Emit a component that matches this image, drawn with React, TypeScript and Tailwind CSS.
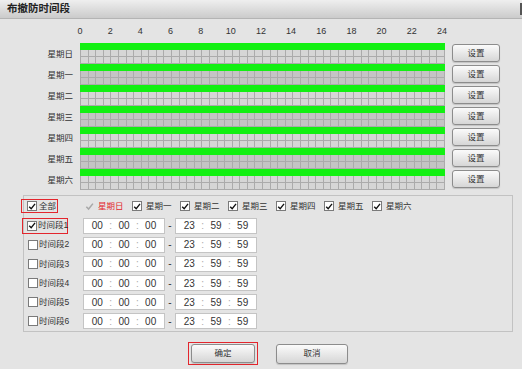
import { type ReactNode } from "react";

const days = ["星期日", "星期一", "星期二", "星期三", "星期四", "星期五", "星期六"];
const ticks = [0, 2, 4, 6, 8, 10, 12, 14, 16, 18, 20, 22, 24];
const cells = Array.from({ length: 96 }, (_, i) => i);

function Check({ checked, muted }: { checked: boolean; muted?: boolean }) {
  return (
    <span
      className={`w-[10px] h-[10px] flex items-center justify-center shrink-0 ${
        muted ? "" : "border border-[#7a7a7a] bg-white"
      }`}
    >
      {checked && (
        <svg viewBox="0 0 10 10" className="w-[9px] h-[9px]">
          <path
            d="M1.5 5.2 L4 7.8 L8.8 1.8"
            fill="none"
            stroke={muted ? "#a8a8a8" : "#111"}
            strokeWidth="1.7"
          />
        </svg>
      )}
    </span>
  );
}

function GrayButton({ children, className }: { children: ReactNode; className: string }) {
  return (
    <button
      className={`flex items-center justify-center border border-[#8c8c8c] rounded-[3px] bg-gradient-to-b from-[#fbfbfb] to-[#d6d6d6] text-[#333] text-[8.5px] shadow-[0_1px_1px_rgba(0,0,0,0.15)] ${className}`}
    >
      {children}
    </button>
  );
}

function TimeBox({ values }: { values: string[] }) {
  return (
    <div className="w-[82px] h-[16px] bg-white border border-[#c4c4c4] flex items-center text-[10px] text-[#333]">
      <span className="flex-1 text-center">{values[0]}</span>
      <span className="w-0 flex justify-center text-[#aaa]">:</span>
      <span className="flex-1 text-center">{values[1]}</span>
      <span className="w-0 flex justify-center text-[#aaa]">:</span>
      <span className="flex-1 text-center">{values[2]}</span>
    </div>
  );
}

export default function App() {
  return (
    <div className="w-[522px] h-[369px] overflow-hidden bg-[#e4e4e4] flex flex-col font-['Liberation_Sans','Noto_Sans_CJK_SC',sans-serif] text-[#333] whitespace-nowrap">
      {/* title bar */}
      <div className="h-[19px] shrink-0 flex items-center justify-between pl-[7px] bg-gradient-to-b from-[#efefef] to-[#cbcbcb] border-b border-[#b4b4b4]">
        <span className="text-[10.5px] font-bold text-[#222]">布撤防时间段</span>
        <span className="w-[2px] h-[12px] bg-[#555]" />
      </div>

      {/* hour axis */}
      <div className="flex h-[24px] items-center pt-[2px]">
        <div className="w-[80px] shrink-0" />
        <div className="w-[362px] flex justify-between text-[9px]">
          {ticks.map((t) => (
            <div key={t} className="w-0 flex justify-center">
              {t}
            </div>
          ))}
        </div>
      </div>

      {/* week schedule */}
      <div className="flex flex-col">
        {days.map((d, i) => (
          <div key={d} className="flex h-[21px]">
            <div className="w-[80px] shrink-0 pr-[7px] flex items-center justify-end text-[8.5px] pt-[1px]">
              {d}
            </div>
            <div className="w-[365px] shrink-0 flex flex-col">
              <div className="h-[7px] bg-[#12f012]" />
              <div
                className={`h-[14px] grid grid-cols-[repeat(48,minmax(0,1fr))] grid-rows-2 border-l border-[#a9a9a9] ${
                  i % 2 === 0 ? "bg-[#d6d6d6]" : "bg-[#c4c4c4]"
                }`}
              >
                {cells.map((c) => (
                  <div key={c} className="border-r border-b border-[#ababab]" />
                ))}
              </div>
            </div>
            <div className="pl-[7px] pt-[1px]">
              <GrayButton className="w-[48px] h-[18px]">设置</GrayButton>
            </div>
          </div>
        ))}
      </div>

      {/* period panel */}
      <div className="ml-[23px] mt-[5px] w-[490px] h-[137px] border border-[#c2c2c2] flex flex-col pl-[4px] pt-[1px] text-[8.5px]">
        <div className="flex items-center h-[19px]">
          <div className="w-[56px] shrink-0">
            <div className="-ml-[7px] w-[37px] h-[14px] border-[1.5px] border-[#e3262d] flex items-center pl-[5px] gap-[2px]">
              <Check checked />
              <span>全部</span>
            </div>
          </div>
          {days.map((d, i) => (
            <div key={d} className="w-[48px] flex items-center gap-[4px]">
              <Check checked muted={i === 0} />
              <span className={i === 0 ? "text-[#e3262d]" : ""}>{d}</span>
            </div>
          ))}
        </div>
        {[1, 2, 3, 4, 5, 6].map((n) => (
          <div key={n} className="flex items-center h-[19.2px]">
            <div className="w-[55px] shrink-0">
              {n === 1 ? (
                <div className="-ml-[6px] w-[46px] h-[16px] border-[1.5px] border-[#e3262d] flex items-center pl-[4px] gap-[1px]">
                  <Check checked />
                  <span>时间段1</span>
                </div>
              ) : (
                <div className="flex items-center gap-[1px]">
                  <Check checked={false} />
                  <span>时间段{n}</span>
                </div>
              )}
            </div>
            <TimeBox values={["00", "00", "00"]} />
            <span className="w-[10px] text-center text-[10px]">-</span>
            <TimeBox values={["23", "59", "59"]} />
          </div>
        ))}
      </div>

      {/* actions */}
      <div className="flex items-center mt-[10px] pl-[188px] gap-[18px]">
        <div className="w-[70px] h-[23px] border-[1.5px] border-[#e3262d] flex items-center justify-center">
          <GrayButton className="w-[64px] h-[19px]">确定</GrayButton>
        </div>
        <GrayButton className="w-[72px] h-[20px]">取消</GrayButton>
      </div>
    </div>
  );
}
